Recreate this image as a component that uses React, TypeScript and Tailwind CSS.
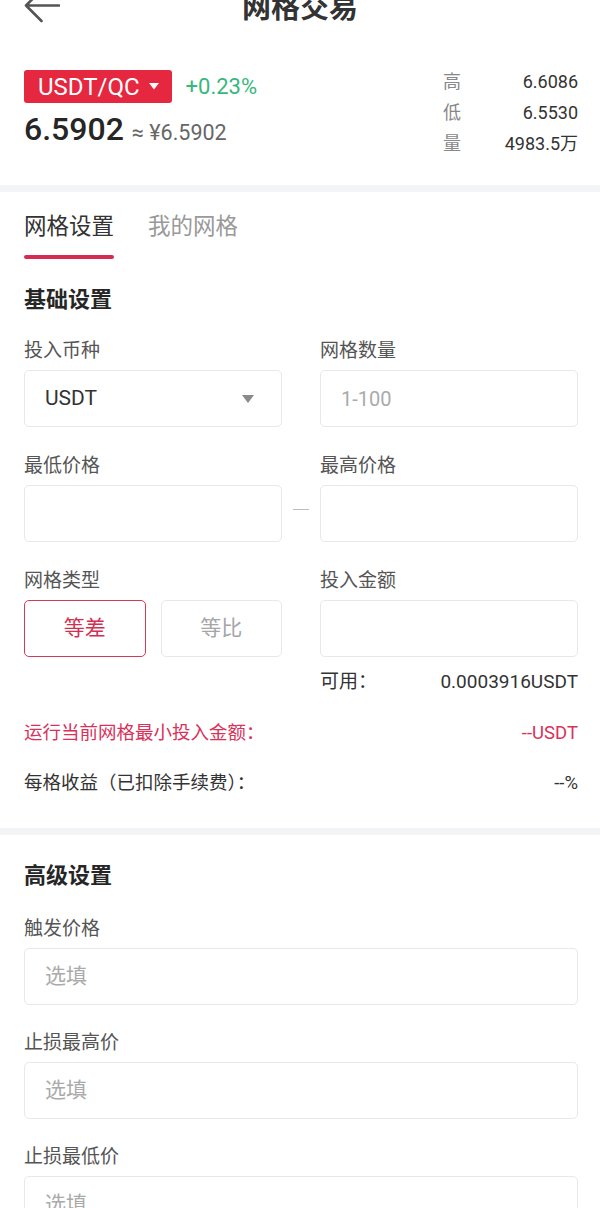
import type { ReactNode } from 'react'

const font = { fontFamily: 'Roboto, "Noto Sans CJK SC", sans-serif' }

function Field({ label, children }: { label: string; children: ReactNode }) {
  return (
    <div className="flex-1 min-w-0">
      <div className="text-[19px] leading-[24px] text-[#555] mb-[7px]">{label}</div>
      {children}
    </div>
  )
}

function Box({ children, className = '' }: { children?: ReactNode; className?: string }) {
  return (
    <div className={`h-[57px] rounded-[5px] border border-[#e8e8e8] flex items-center px-[20px] ${className}`}>
      {children}
    </div>
  )
}

function Gap({ dash }: { dash?: boolean }) {
  return (
    <div className="w-[38px] shrink-0 flex items-end">
      {dash && (
        <div className="h-[57px] w-full flex items-center justify-center pb-[8px]">
          <div className="w-[16px] h-[1.5px] bg-[#bdbdbd]" />
        </div>
      )}
    </div>
  )
}

export default function App() {
  return (
    <div className="min-h-screen bg-white overflow-hidden" style={font}>
      {/* Header, cut off at the top */}
      <div className="relative h-[28px] flex justify-center">
        <svg className="absolute left-[24px] top-[-11px]" width="36" height="34" viewBox="0 0 36 34" fill="none">
          <path d="M2 16.5H35M17.5 1L2 16.5L17.5 32" stroke="#555" strokeWidth="2.6" strokeLinecap="round" strokeLinejoin="round" />
        </svg>
        <h1 className="text-[29px] leading-[29px] font-bold text-[#333] -mt-[6px]">网格交易</h1>
      </div>

      {/* Ticker */}
      <div className="pl-6 pr-[22px] pt-[38px] pb-[26px] flex justify-between items-start">
        <div className="pt-[4px]">
          <div className="flex items-center">
            <div className="h-[33px] bg-[#e5273f] rounded-[3px] pl-[14px] pr-[13px] flex items-center gap-[9px] text-white">
              <span className="text-[24px] leading-none">USDT/QC</span>
              <svg width="10" height="7" viewBox="0 0 10 7"><path d="M0 0H10L5 6.5Z" fill="#fff" /></svg>
            </div>
            <span className="ml-[14px] text-[22px] leading-none text-[#37b87c]">+0.23%</span>
          </div>
          <div className="mt-[8px] flex items-baseline h-[36px] leading-[36px]">
            <span className="text-[32px] font-medium text-[#262626]">6.5902</span>
            <span className="ml-[8px] text-[21.5px] text-[#666]">≈ ¥6.5902</span>
          </div>
        </div>
        <div className="w-[135px] text-[18px] leading-[31px]">
          <div className="flex justify-between"><span className="text-[#888]">高</span><span className="text-[#333]">6.6086</span></div>
          <div className="flex justify-between"><span className="text-[#888]">低</span><span className="text-[#333]">6.5530</span></div>
          <div className="flex justify-between"><span className="text-[#888]">量</span><span className="text-[#333]">4983.5万</span></div>
        </div>
      </div>

      <div className="h-[7px] bg-[#f3f4f6]" />

      {/* Basic settings */}
      <div className="pl-6 pr-[22px] pt-[21px] pb-[33px]">
        <div className="flex gap-[34px] text-[22.5px] leading-[26px]">
          <div>
            <div className="text-[#333]">网格设置</div>
            <div className="mt-[16px] h-[4px] rounded-full bg-[#d62b4e]" />
          </div>
          <div className="text-[#999]">我的网格</div>
        </div>

        <h2 className="mt-[28px] text-[22px] leading-[26px] font-bold text-[#262626]">基础设置</h2>

        <div className="mt-[26px] flex flex-col gap-[27px]">
          <div className="flex">
            <Field label="投入币种">
              <Box className="justify-between pr-[27px]">
                <span className="text-[21px] text-[#333]">USDT</span>
                <svg width="12" height="8" viewBox="0 0 12 8"><path d="M0 0H12L6 8Z" fill="#8a8a8a" /></svg>
              </Box>
            </Field>
            <Gap />
            <Field label="网格数量">
              <Box><span className="text-[20px] text-[#aaa]">1-100</span></Box>
            </Field>
          </div>

          <div className="flex">
            <Field label="最低价格"><Box /></Field>
            <Gap dash />
            <Field label="最高价格"><Box /></Field>
          </div>

          <div className="flex">
            <Field label="网格类型">
              <div className="flex gap-[15px]">
                <div className="flex-1 h-[57px] rounded-[5px] border-[1.5px] border-[#d23a58] flex items-center justify-center text-[21px] text-[#d42f50]">等差</div>
                <div className="flex-1 h-[57px] rounded-[5px] border border-[#e8e8e8] flex items-center justify-center text-[21px] text-[#a5a5a5]">等比</div>
              </div>
            </Field>
            <Gap />
            <Field label="投入金额">
              <Box />
              <div className="mt-[13px] flex justify-between text-[19px] leading-[24px] text-[#333]">
                <span>可用：</span>
                <span>0.0003916USDT</span>
              </div>
            </Field>
          </div>
        </div>

        <div className="mt-[27px] flex justify-between text-[18.5px] leading-[24px] text-[#d8325a]">
          <span>运行当前网格最小投入金额：</span>
          <span>--USDT</span>
        </div>
        <div className="mt-[26px] flex justify-between text-[18.5px] leading-[24px] text-[#333]">
          <span>每格收益（已扣除手续费）：</span>
          <span>--%</span>
        </div>
      </div>

      <div className="h-[7px] bg-[#f3f4f6]" />

      {/* Advanced settings */}
      <div className="pl-6 pr-[22px] pt-[28px]">
        <h2 className="text-[22px] leading-[26px] font-bold text-[#262626]">高级设置</h2>
        <div className="mt-[28px] flex flex-col gap-[26px]">
          {['触发价格', '止损最高价', '止损最低价'].map((l) => (
            <Field key={l} label={l}>
              <Box><span className="text-[21px] text-[#aaa]">选填</span></Box>
            </Field>
          ))}
        </div>
      </div>
    </div>
  )
}
